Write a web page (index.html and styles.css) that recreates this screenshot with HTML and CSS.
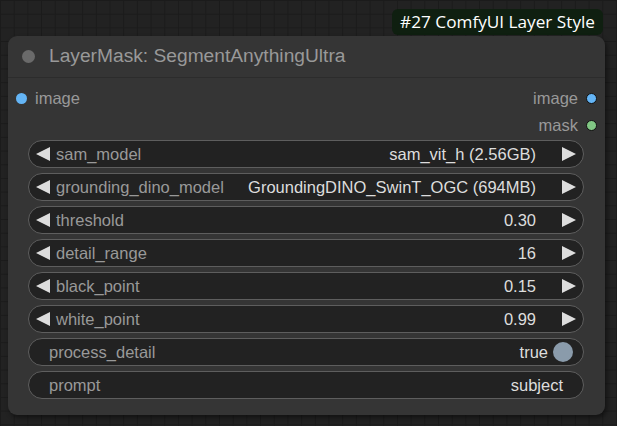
FILE: index.html
```html
<!DOCTYPE html>
<html>
<head>
<meta charset="utf-8">
<link rel="stylesheet" href="styles.css">
</head>
<body>
<div class="canvas">
  <div class="stack">
    <div class="badge">#27 ComfyUI Layer Style</div>
    <div class="node">
      <div class="title">
        <span class="title-dot"></span>
        <span class="title-text">LayerMask: SegmentAnythingUltra</span>
      </div>
      <div class="body">
        <div class="slot-row">
          <div class="slot in"><span class="dot blue"></span><span class="slot-label">image</span></div>
          <div class="slot out"><span class="slot-label">image</span><span class="dot blue ring"></span></div>
        </div>
        <div class="slot-row">
          <div class="slot in"></div>
          <div class="slot out"><span class="slot-label">mask</span><span class="dot green ring"></span></div>
        </div>
        <div class="widgets">
          <div class="widget arrows">
            <svg class="arrow" viewBox="0 0 14 14"><polygon points="14,0 14,14 0,7"/></svg>
            <span class="label">sam_model</span>
            <span class="value">sam_vit_h (2.56GB)</span>
            <svg class="arrow" viewBox="0 0 14 14"><polygon points="0,0 0,14 14,7"/></svg>
          </div>
          <div class="widget arrows">
            <svg class="arrow" viewBox="0 0 14 14"><polygon points="14,0 14,14 0,7"/></svg>
            <span class="label">grounding_dino_model</span>
            <span class="value">GroundingDINO_SwinT_OGC (694MB)</span>
            <svg class="arrow" viewBox="0 0 14 14"><polygon points="0,0 0,14 14,7"/></svg>
          </div>
          <div class="widget arrows">
            <svg class="arrow" viewBox="0 0 14 14"><polygon points="14,0 14,14 0,7"/></svg>
            <span class="label">threshold</span>
            <span class="value">0.30</span>
            <svg class="arrow" viewBox="0 0 14 14"><polygon points="0,0 0,14 14,7"/></svg>
          </div>
          <div class="widget arrows">
            <svg class="arrow" viewBox="0 0 14 14"><polygon points="14,0 14,14 0,7"/></svg>
            <span class="label">detail_range</span>
            <span class="value">16</span>
            <svg class="arrow" viewBox="0 0 14 14"><polygon points="0,0 0,14 14,7"/></svg>
          </div>
          <div class="widget arrows">
            <svg class="arrow" viewBox="0 0 14 14"><polygon points="14,0 14,14 0,7"/></svg>
            <span class="label">black_point</span>
            <span class="value">0.15</span>
            <svg class="arrow" viewBox="0 0 14 14"><polygon points="0,0 0,14 14,7"/></svg>
          </div>
          <div class="widget arrows">
            <svg class="arrow" viewBox="0 0 14 14"><polygon points="14,0 14,14 0,7"/></svg>
            <span class="label">white_point</span>
            <span class="value">0.99</span>
            <svg class="arrow" viewBox="0 0 14 14"><polygon points="0,0 0,14 14,7"/></svg>
          </div>
          <div class="widget toggle">
            <span class="label">process_detail</span>
            <span class="value">true</span>
            <span class="knob"></span>
          </div>
          <div class="widget text">
            <span class="label">prompt</span>
            <span class="value">subject</span>
          </div>
        </div>
      </div>
    </div>
  </div>
</div>
</body>
</html>
```

FILE: styles.css
```css
html, body {
  margin: 0;
  padding: 0;
}
body {
  width: 617px;
  height: 426px;
  overflow: hidden;
  background-color: #222222;
  background-image:
    linear-gradient(to right, #1b1b1b 1px, transparent 1px),
    linear-gradient(to bottom, #1b1b1b 1px, transparent 1px);
  background-size: 13.7px 13.7px;
  font-family: "Liberation Sans", Arial, sans-serif;
}
.canvas {
  padding: 9px 0 0 8px;
}
.stack {
  width: 597px;
  display: flex;
  flex-direction: column;
  align-items: flex-end;
}
.badge {
  height: 26px;
  margin-right: 2px;
  margin-bottom: 1px;
  padding: 0 8px;
  box-sizing: border-box;
  border-radius: 6px;
  background: #0f1f10;
  color: #ffffff;
  font-family: "Open Sans", "Noto Sans", sans-serif;
  font-size: 17.2px;
  line-height: 26px;
  white-space: nowrap;
}
.node {
  width: 597px;
  height: 379px;
  box-sizing: border-box;
  background: #353535;
  border-radius: 9px;
  box-shadow: 2px 3px 5px rgba(0, 0, 0, 0.45);
  display: flex;
  flex-direction: column;
}
.title {
  height: 42px;
  box-sizing: border-box;
  border-bottom: 1px solid #2c2c2c;
  display: flex;
  align-items: center;
  padding-left: 14px;
  padding-bottom: 1px;
}
.title-dot {
  width: 13px;
  height: 13px;
  border-radius: 50%;
  background: #6a6a6a;
  margin-right: 14px;
  flex: none;
}
.title-text {
  color: #999999;
  font-size: 19.2px;
  white-space: nowrap;
}
.body {
  padding: 7px 0 16px 0;
  display: flex;
  flex-direction: column;
}
.slot-row {
  height: 27px;
  display: flex;
  justify-content: space-between;
  align-items: center;
}
.slot {
  display: flex;
  align-items: center;
  font-size: 16.5px;
  color: #999999;
}
.slot.in {
  padding-left: 8px;
}
.slot.in .dot {
  margin-right: 8px;
}
.slot.out {
  padding-right: 8px;
}
.slot.out .dot {
  margin-left: 8px;
}
.dot {
  width: 11px;
  height: 11px;
  border-radius: 50%;
  box-sizing: border-box;
  flex: none;
}
.dot.blue {
  background: #64b5f6;
}
.dot.green {
  background: #81c784;
}
.dot.ring {
  border: 1px solid #111111;
}
.widgets {
  margin-top: 1px;
  padding: 0 21px 0 20px;
  display: flex;
  flex-direction: column;
  gap: 5px;
}
.widget {
  height: 28px;
  box-sizing: border-box;
  border: 1px solid #5e5e5e;
  border-radius: 14px;
  background: #222222;
  display: flex;
  align-items: center;
  font-size: 16.5px;
  white-space: nowrap;
}
.label {
  color: #999999;
}
.value {
  color: #dddddd;
  margin-left: auto;
}
.arrow {
  width: 14px;
  height: 14px;
  fill: #dddddd;
  flex: none;
}
.widget.arrows {
  padding: 0 7px;
}
.widget.arrows .label {
  margin-left: 6px;
}
.widget.arrows .value {
  margin-right: 26px;
}
.widget.toggle {
  padding: 0 10px 0 20px;
}
.knob {
  width: 20px;
  height: 20px;
  border-radius: 50%;
  background: #8a9bab;
  margin-left: 5px;
  flex: none;
}
.widget.text {
  padding: 0 20px;
}
```
